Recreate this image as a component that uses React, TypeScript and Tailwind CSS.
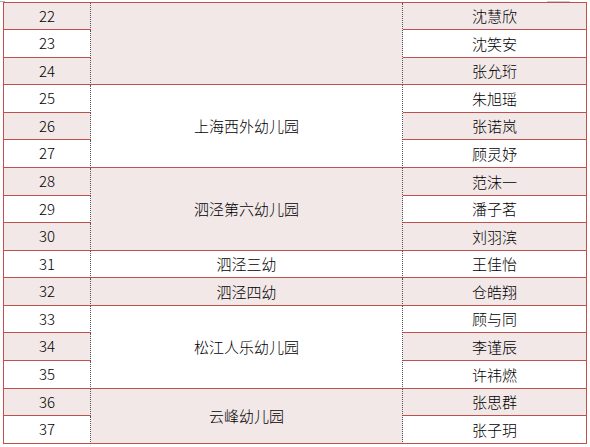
import React from "react";

type Row = { n: number; name: string };
const rows: Row[] = [
  { n: 22, name: "沈慧欣" },
  { n: 23, name: "沈笑安" },
  { n: 24, name: "张允珩" },
  { n: 25, name: "朱旭瑶" },
  { n: 26, name: "张诺岚" },
  { n: 27, name: "顾灵妤" },
  { n: 28, name: "范沫一" },
  { n: 29, name: "潘子茗" },
  { n: 30, name: "刘羽滨" },
  { n: 31, name: "王佳怡" },
  { n: 32, name: "仓皓翔" },
  { n: 33, name: "顾与同" },
  { n: 34, name: "李谨辰" },
  { n: 35, name: "许祎燃" },
  { n: 36, name: "张思群" },
  { n: 37, name: "张子玥" },
];

const groups: Record<number, { span: number; text: string; pink: boolean }> = {
  0: { span: 3, text: "", pink: true },
  3: { span: 3, text: "上海西外幼儿园", pink: false },
  6: { span: 3, text: "泗泾第六幼儿园", pink: true },
  9: { span: 1, text: "泗泾三幼", pink: false },
  10: { span: 1, text: "泗泾四幼", pink: true },
  11: { span: 3, text: "松江人乐幼儿园", pink: false },
  14: { span: 2, text: "云峰幼儿园", pink: true },
};

const spanCls: Record<number, string> = {
  1: "row-span-1",
  2: "row-span-2",
  3: "row-span-3",
};

export default function App() {
  const cells: React.ReactNode[] = [];
  rows.forEach((r, i) => {
    const pink = i % 2 === 0;
    const bg = pink ? "bg-[#f2e8e8]" : "bg-white";
    cells.push(
      <div
        key={`n${i}`}
        className={`col-start-1 flex items-center justify-center pb-[2px] border-b border-b-[#c0504d] border-r border-r-[#555] border-dotted ${bg}`}
        style={{ borderBottomStyle: "solid" }}
      >
        {r.n}
      </div>
    );
    const g = groups[i];
    if (g) {
      cells.push(
        <div
          key={`g${i}`}
          className={`col-start-2 ${spanCls[g.span]} flex items-center justify-center pb-px border-b border-b-[#c0504d] border-r border-r-[#555] border-dotted ${g.pink ? "bg-[#f2e8e8]" : "bg-white"}`}
          style={{ borderBottomStyle: "solid" }}
        >
          {g.text}
        </div>
      );
    }
    cells.push(
      <div
        key={`m${i}`}
        className={`col-start-3 flex items-center justify-center pb-px border-b border-r border-[#c0504d] ${bg}`}
      >
        {r.name}
      </div>
    );
  });

  return (
    <div className="relative w-[590px] h-[447px] bg-white overflow-hidden text-black text-[15px] font-light leading-none font-['Noto_Sans_CJK_SC','Noto_Sans',sans-serif]">
      <span className="absolute left-0 top-[1px] w-[5px] h-px bg-[#b0b0b0]" />
      <span className="absolute left-[547px] top-[1px] w-[23px] h-px bg-[#c8c8c8]" />
      <div className="pl-[3px] pt-[2px]">
        <div className="grid grid-cols-[87px_312px_184px] grid-rows-[27px_28px_27px_28px_27px_28px_28px_27px_28px_27px_28px_27px_28px_28px_27px_28px] w-[584px] border-t border-l border-[#c0504d]">
          {cells}
        </div>
      </div>
    </div>
  );
}
